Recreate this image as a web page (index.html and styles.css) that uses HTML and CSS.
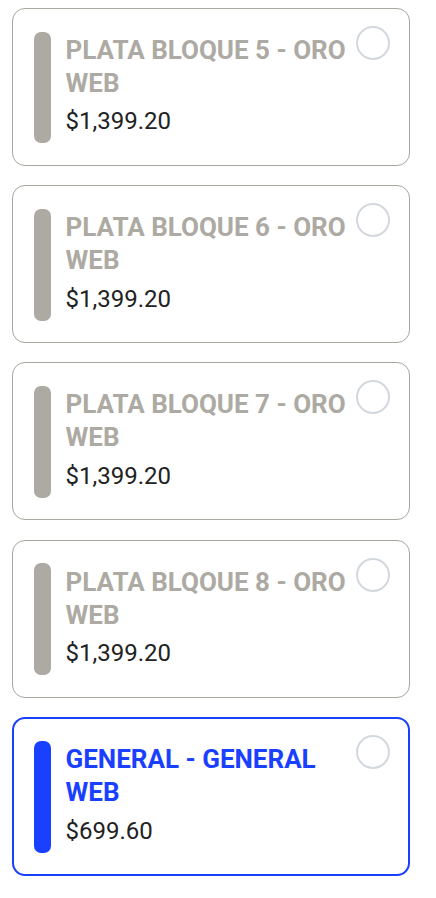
FILE: index.html
```html
<!DOCTYPE html>
<html lang="es">
<head>
<meta charset="utf-8">
<title>Boletos</title>
<link rel="stylesheet" href="styles.css">
</head>
<body>
<div class="list">
  <div class="card">
    <div class="bar"></div>
    <div class="info">
      <div class="title">PLATA BLOQUE 5 - ORO WEB</div>
      <div class="price">$1,399.20</div>
    </div>
    <div class="radio"></div>
  </div>
  <div class="card">
    <div class="bar"></div>
    <div class="info">
      <div class="title">PLATA BLOQUE 6 - ORO WEB</div>
      <div class="price">$1,399.20</div>
    </div>
    <div class="radio"></div>
  </div>
  <div class="card">
    <div class="bar"></div>
    <div class="info">
      <div class="title">PLATA BLOQUE 7 - ORO WEB</div>
      <div class="price">$1,399.20</div>
    </div>
    <div class="radio"></div>
  </div>
  <div class="card">
    <div class="bar"></div>
    <div class="info">
      <div class="title">PLATA BLQOUE 8 - ORO WEB</div>
      <div class="price">$1,399.20</div>
    </div>
    <div class="radio"></div>
  </div>
  <div class="card card-active">
    <div class="bar"></div>
    <div class="info">
      <div class="title">GENERAL - GENERAL WEB</div>
      <div class="price">$699.60</div>
    </div>
    <div class="radio"></div>
  </div>
</div>
</body>
</html>
```

FILE: styles.css
```css
html, body {
  margin: 0;
  padding: 0;
  background: #ffffff;
}

body {
  font-family: Roboto, "Liberation Sans", sans-serif;
}

.list {
  display: flex;
  flex-direction: column;
  gap: 19.2px;
  padding: 8px 26px 0 12px;
}

.card {
  display: flex;
  align-items: flex-start;
  border: 1px solid #a9a69f;
  border-radius: 13px;
  padding: 18.5px 19px 17.5px 21px;
  background: #ffffff;
}

.bar {
  flex: 0 0 17px;
  align-self: stretch;
  margin: 4px 0;
  border-radius: 7px;
  background: #adaaa3;
}

.info {
  flex: 1;
  margin: 4px 6px 4px 14.5px;
  padding: 2.6px 0 6px;
}

.title {
  font-weight: 700;
  font-size: 26px;
  line-height: 33px;
  color: #adaaa3;
}

.price {
  margin-top: 5.4px;
  font-weight: 400;
  font-size: 24px;
  line-height: 32px;
  color: #222222;
}

.radio {
  flex: 0 0 auto;
  width: 30px;
  height: 30px;
  border: 2px solid #d3d8de;
  border-radius: 50%;
  margin-top: -1.5px;
}

.card-active {
  border-color: #1a40ff;
  border-width: 2px;
  padding: 18px 18px 17px 20px;
}

.card-active .bar {
  background: #1a40ff;
}

.card-active .title {
  color: #1a40ff;
}
```
